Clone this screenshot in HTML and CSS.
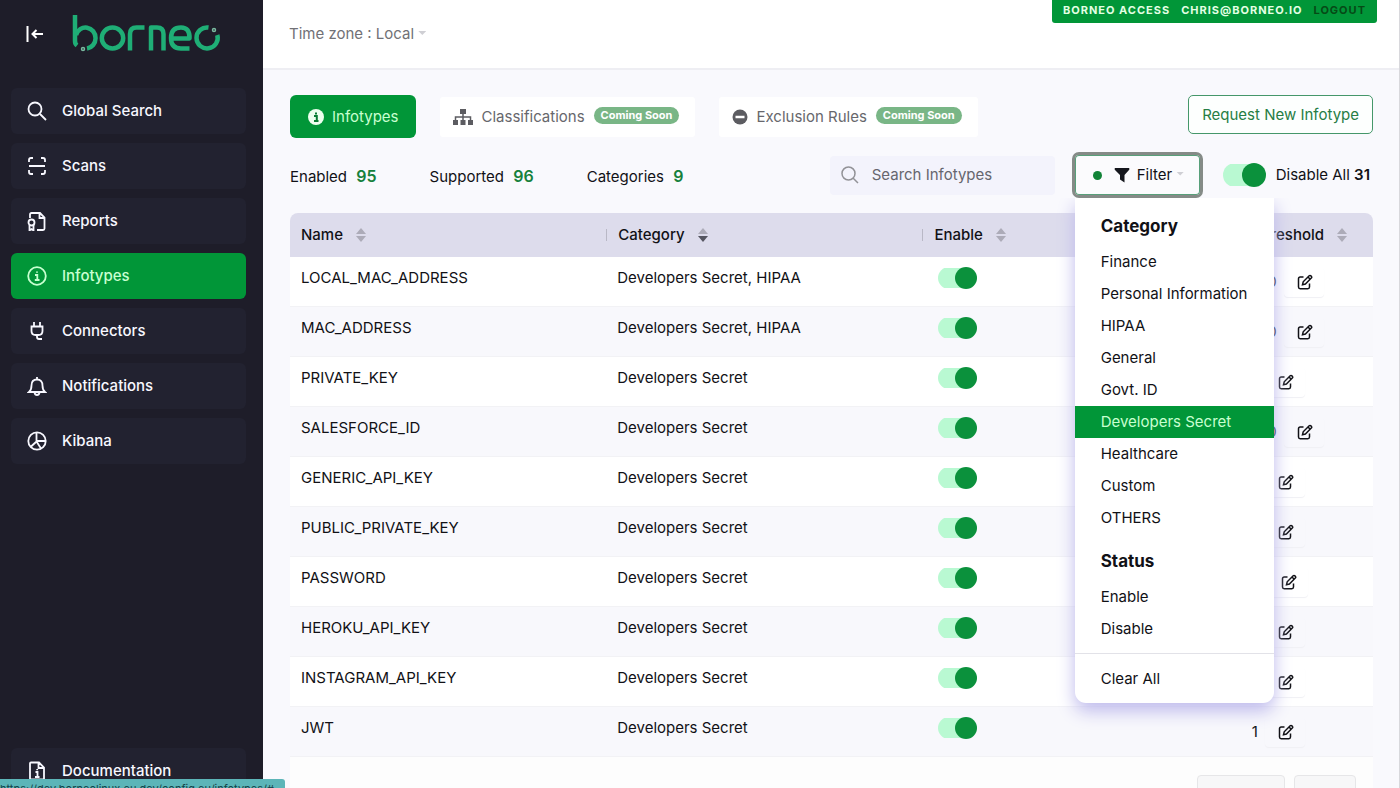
FILE: index.html
```html
<!DOCTYPE html>
<html lang="en">
<head>
<meta charset="utf-8">
<title>Borneo - Infotypes</title>
<link rel="stylesheet" href="styles.css">
</head>
<body>
<svg class="defs" aria-hidden="true">
  <symbol id="edit" viewBox="0 0 16 16"><path d="M6.5 3H3.2Q1.5 3 1.5 4.700V13Q1.500 14.700 3.200 14.700H10.800Q12.500 14.700 12.500 13V9.500" /><path d="M5.500 10.700L6.200 7.800L12.200 1.800Q13 1 13.900 1.900L14.300 2.300Q15.200 3.200 14.300 4L8.400 10ZM11 3L13.200 5.200"/></symbol>
  <symbol id="sort" viewBox="0 0 10 14"><path class="up" d="M5 0L10 6H0Z"/><path class="down" d="M0 8H10L5 14Z"/></symbol>
</svg>
<aside class="sidebar">
  <div class="brand">
    <button class="collapse" aria-label="Collapse menu"><svg width="18" height="18" viewBox="0 0 18 18"><path d="M1.500 1V17M17 9H7M10.500 5L6.500 9L10.500 13"/></svg></button>
    <svg class="logo" width="150" height="40" viewBox="0 0 150 40" role="img" aria-label="borneo">
      <g fill="none" stroke="#1fae76" stroke-width="4.500" stroke-linejoin="round">
        <path d="M3 1V27Q3 30 5 31.500"/><path d="M4 21A10 10.500 0 1 1 15 34.500"/>
        <ellipse cx="40.500" cy="24" rx="10.700" ry="10.500"/>
        <path d="M58 36.500V20Q58 13.500 64.500 13.500H72.500"/>
        <path d="M79 36.500V13.500H85Q91.500 13.500 91.500 20V36.500"/>
        <path d="M100 24.500H117.500Q118 13.500 109 13.500Q99 13.500 99 24Q99 34.500 109 34.500H117.500"/>
        <path d="M136.500 13.500A10.600 10.500 0 1 0 145.300 21"/>
      </g>
      <g fill="none" stroke="#79b89f" stroke-width="1.500"><circle cx="11" cy="35" r="1.500"/><circle cx="142" cy="16" r="1.500"/></g>
    </svg>
  </div>
  <nav class="menu">
    <a class="item" href="#"><svg viewBox="0 0 20 20"><circle cx="8" cy="8" r="6.500"/><path d="M13 13L19 19"/></svg>Global Search</a>
    <a class="item" href="#"><svg viewBox="0 0 20 20"><path d="M2 6V4Q2 2 4 2H6M14 2H16Q18 2 18 4V6M2 14V16Q2 18 4 18H6M14 18H16Q18 18 18 16V14M2 10H18"/></svg>Scans</a>
    <a class="item" href="#"><svg viewBox="0 0 20 20"><path d="M3 7V3.500Q3 2 4.500 2H13L17.500 6.500V17.500Q17.500 19 16 19H10M12.500 2V7H17.500"/><circle cx="4.500" cy="11.500" r="3"/><path d="M2.500 14V19.500L4.500 18L6.500 19.500V14"/></svg>Reports</a>
    <a class="item active" href="#"><svg viewBox="0 0 20 20"><circle cx="10" cy="10" r="8.800"/><path d="M8 9H10.300V14M7.800 14H12.500M10 5.500V6.800"/></svg>Infotypes</a>
    <a class="item" href="#"><svg viewBox="0 0 20 20"><path d="M7 1V5M13 1V5M4.500 5.500H15.500V10Q15.500 14 11.500 14H8.500Q4.500 14 4.500 10ZM10 14V16Q10 18 12 18H15"/></svg>Connectors</a>
    <a class="item" href="#"><svg viewBox="0 0 20 20"><path d="M2 16H18Q15.500 14 15.500 9.500Q15.500 3.500 10 3.500Q4.500 3.500 4.500 9.500Q4.500 14 2 16ZM10 1V3.500M7.500 16.500Q8 19 10 19Q12 19 12.500 16.500"/></svg>Notifications</a>
    <a class="item" href="#"><svg viewBox="0 0 20 20"><circle cx="10" cy="10" r="8.700"/><path d="M9.500 1.500V10.500L3.500 16M9.500 10.500L14 17.500M9.500 10H18.500"/></svg>Kibana</a>
  </nav>
  <a class="item docs" href="#"><svg viewBox="0 0 20 20"><path d="M3 2.500Q3 1.500 4 1.500H12L17 6.500V18.500H4Q3 18.500 3 17.500ZM11.500 1.500V7H17M8.500 11H10.500V16M8 16H12.500M10.200 8V9.300"/></svg>Documentation</a>
</aside>

<div class="page">
  <header class="topbar">
    <button class="zone">Time zone : Local <i class="caret"></i></button>
    <div class="account"><span>BORNEO ACCESS</span><span>CHRIS@BORNEO.IO</span><a href="#">LOGOUT</a></div>
  </header>
  <main class="content">
    <div class="tabs">
      <button class="tab selected"><svg width="16" height="16" viewBox="0 0 16 16"><circle cx="8" cy="8" r="8" fill="#edffee"/><path d="M6 7H8.800V12M6 12H10.500M8 3.500V5.500" fill="none" stroke="#087c33" stroke-width="2"/></svg>Infotypes</button>
      <button class="tab"><svg width="20" height="16" viewBox="0 0 20 16"><path d="M7 0H13V5H7ZM0 11H5V16H0ZM7.500 11H12.500V16H7.500ZM15 11H20V16H15Z" fill="#5c5c61"/><path d="M10 5V11M2.500 11V8H17.500V11" fill="none" stroke="#5c5c61" stroke-width="1.500"/></svg>Classifications<span class="soon">Coming Soon</span></button>
      <button class="tab"><svg width="16" height="16" viewBox="0 0 16 16"><circle cx="8" cy="8" r="7.500" fill="#5c5c61"/><path d="M3.500 8H12.500" stroke="#fff" stroke-width="2.500"/></svg>Exclusion Rules<span class="soon">Coming Soon</span></button>
      <button class="request">Request New Infotype</button>
    </div>
    <div class="tools">
      <div class="stats"><span>Enabled <b>95</b></span><span>Supported <b>96</b></span><span>Categories <b>9</b></span></div>
      <label class="search"><svg width="18" height="18" viewBox="0 0 18 18"><circle cx="7.500" cy="7.500" r="6.500"/><path d="M12 12L17 17"/></svg><input type="text" placeholder="Search Infotypes" aria-label="Search Infotypes"></label>
      <div class="filter">
        <button class="filter-button"><i class="dot"></i><svg width="16" height="16" viewBox="0 0 16 16"><path d="M1 1H15Q16 2 15 3L10.500 8V15.500L6 12.500V8L1 3Q0 2 1 1Z" fill="#15171d"/></svg>Filter<i class="caret"></i></button>
        <div class="dropdown">
          <h3>Category</h3>
          <button>Finance</button><button>Personal Information</button><button>HIPAA</button><button>General</button><button>Govt. ID</button><button class="chosen">Developers Secret</button><button>Healthcare</button><button>Custom</button><button>OTHERS</button>
          <h3 class="status-title">Status</h3>
          <button>Enable</button><button>Disable</button>
          <hr>
          <button>Clear All</button>
        </div>
      </div>
      <label class="all"><input class="switch" type="checkbox" checked><span>Disable All <b>31</b></span></label>
    </div>
    <table>
      <colgroup><col class="wide"><col class="wide"><col class="wide"><col></colgroup>
      <thead><tr>
        <th><span>Name<svg class="sort"><use href="#sort"/></svg></span></th>
        <th><span>Category<svg class="sort desc"><use href="#sort"/></svg></span></th>
        <th><span>Enable<svg class="sort"><use href="#sort"/></svg></span></th>
        <th><span>Threshold<svg class="sort"><use href="#sort"/></svg></span></th>
      </tr></thead>
      <tbody id="rows"></tbody>
    </table>
    <div class="pager"><button aria-label="Rows per page"></button><button class="small" aria-label="Next"></button></div>
  </main>
</div>
<div class="link-status">https://dev.borneolinux.eu.dev/config.eu/infotypes/#</div>
<script src="rows.js"></script>
</body>
</html>
```
FILE: styles.css
```css
* { box-sizing: border-box; }
body { margin: 0; height: 100vh; display: flex; overflow: hidden; background: #f9f9fd; color: #111116; font: 15px/24px Inter, "Liberation Sans", sans-serif; }
button, input { font: inherit; color: inherit; border: 0; background: none; padding: 0; margin: 0; }
a { color: inherit; text-decoration: none; }
.defs { position: absolute; width: 0; height: 0; }

.sidebar { width: 263px; flex: none; background: #1e1d29; padding: 12px 17px 0 11px; display: flex; flex-direction: column; height: 100vh; }
.brand { display: flex; align-items: center; gap: 28px; padding-left: 15px; height: 44px; margin-bottom: 32px; }
.collapse { height: 18px; display: flex; color: #fff; }
.collapse svg, .item svg, .search svg, .edit svg { fill: none; stroke: currentColor; stroke-width: 2; }
.menu { display: flex; flex-direction: column; gap: 9px; }
.item { display: flex; align-items: center; gap: 15px; height: 46px; padding-left: 16px; border-radius: 6px; background: #222230; color: #f8f8ff; font-weight: 500; }
.item svg { width: 20px; height: 20px; stroke-width: 1.8; }
.item.active { background: #019638; color: #c8ffd0; }
.docs { margin-top: auto; margin-bottom: -6px; flex: none; }

.page { flex: 1; min-width: 0; border-right: 1px solid #d8d8dc; }
.topbar { height: 70px; background: #fff; border-bottom: 2px solid #eeeef3; display: flex; justify-content: space-between; padding: 0 22px 0 26px; align-items: flex-start; }
.zone { color: #717176; margin-top: 22px; }
.caret { display: inline-block; width: 8px; height: 4px; background: #cfcfd4; clip-path: polygon(0 0, 100% 0, 50% 100%); vertical-align: 4px; }
.account { display: flex; gap: 11px; height: 23px; padding: 0 11px; background: #019638; color: #e4ffe4; border-radius: 0 0 3px 3px; font-size: 11px; line-height: 20px; font-weight: 700; letter-spacing: 1px; }
.account a { color: #064a16; }

.content { padding: 25px 26px 0 27px; }
.tabs { display: flex; gap: 24px; align-items: center; height: 43px; }
.tab { display: flex; align-items: center; height: 40px; padding: 0 16px 0 13px; background: #fff; color: #67676c; border-radius: 3px; }
.tab svg { margin-right: 8px; }
.tab.selected { height: 43px; padding: 0 18px; background: #019638; color: #c8ffd0; border-radius: 6px; }
.soon { background: #79b686; color: #fff; border-radius: 9px; font-size: 11px; line-height: 17px; font-weight: 700; padding: 0 7px; margin: 0 0 2px 9px; }
.request { align-self: flex-start; margin-left: auto; height: 39px; padding: 0 13px; border: 1px solid #45976a; border-radius: 5px; background: #fdfffe; color: #277d45; }

.tools { display: flex; align-items: center; height: 46px; margin-top: 14px; padding-right: 3px; }
.stats { display: flex; gap: 53px; padding-top: 2px; }
.stats b { color: #16813c; font-weight: 600; font-size: 16px; margin-left: 5px; }
.search { margin-left: auto; width: 225px; height: 39px; display: flex; align-items: center; gap: 13px; padding-left: 11px; background: #f3f3fc; border-radius: 4px; color: #929297; }
.search svg { stroke-width: 1.5; flex: none; }
.search input { min-width: 0; flex: 1; outline: 0; }
.search input::placeholder { color: #66666e; opacity: 1; }
.filter { position: relative; margin-left: 17px; }
.filter-button { display: flex; align-items: center; width: 131px; height: 46px; border: 3px solid #858b87; border-radius: 7px; box-shadow: inset 0 0 0 1px #58a07a; padding-left: 18px; background: #fbfbfd; }
.filter-button svg { margin: 0 7px 0 12px; }
.filter-button .caret { margin: -3px 0 0 4px; }
.dot { width: 9px; height: 9px; border-radius: 50%; background: #118337; }
.dropdown { position: absolute; z-index: 2; top: 46px; left: 3px; width: 199px; padding: 12px 0 8px; border-radius: 0 0 11px 11px; background: #fff; box-shadow: 0 8px 18px #bdb9ec; clip-path: inset(0 -30px -40px); display: flex; flex-direction: column; }
.dropdown h3 { margin: 0 0 4px; padding-left: 26px; font-size: 17px; line-height: 32px; font-weight: 700; }
.dropdown .status-title { margin-top: 11px; }
.dropdown button { height: 32px; padding-left: 26px; text-align: left; }
.dropdown .chosen { background: #019638; color: #c8ffd0; }
.dropdown hr { width: 100%; height: 1px; border: 0; background: #e2e2e8; margin: 8px 0 9px; }
.all { display: flex; align-items: center; gap: 10px; margin-left: 20px; white-space: nowrap; }
.all b { font-weight: 600; }
.switch { appearance: none; flex: none; display: flex; justify-content: flex-end; width: 43px; height: 24px; background: linear-gradient(#b9f9d2, #b9f9d2) left / 32px 22px no-repeat; border-radius: 12px; }
.switch::before { content: ""; width: 24px; height: 24px; border-radius: 50%; background: #0b913c; }

table { width: 100%; table-layout: fixed; border-collapse: separate; border-spacing: 0; margin-top: 15px; }
.wide { width: 29.2%; }
th { height: 44px; padding: 0 11px; background: #dddcec; text-align: left; font-weight: 500; }
th:first-child { border-radius: 8px 0 0 0; }
th:last-child { border-radius: 0 8px 0 0; padding: 0 0 0 13px; }
th span { display: flex; align-items: center; height: 12px; gap: 13px; }
th:nth-child(2) span, th:nth-child(3) span { border-left: 1px solid #b9b8c6; padding-left: 11px; margin-left: -11px; }
.sort { width: 10px; height: 14px; fill: #acabb8; }
.desc { --down: #555560; }
.down { fill: var(--down, #acabb8); }
td { height: 50px; padding: 0 11px 7px; background: #f8f8fc; border-bottom: 1px solid #f2f2f5; vertical-align: middle; }
tr:nth-child(odd) td { background: #fff; }
td .switch { width: 39px; height: 22px; margin-left: 5px; background-size: 28px 20px; }
td .switch::before { width: 22px; height: 22px; }
td:last-child { padding: 0 0 0 13px; }
.threshold { display: flex; align-items: center; }
.edit { width: 40px; height: 30px; margin-left: 7px; padding-left: 13px; border-radius: 4px; box-shadow: 0 1px 1px #f0f0f4; display: flex; align-items: center; }
.edit svg { width: 16px; height: 16px; flex: none; stroke-width: 1.5; }
.pager { display: flex; justify-content: flex-end; gap: 9px; height: 60px; padding: 18px 17px 0; background: #fdfdfd; }
.pager button { width: 88px; height: 32px; border: 1px solid #e6e6e8; border-radius: 4px; background: #f7f7f8; }
.pager .small { width: 62px; }
.link-status { position: absolute; left: 0; bottom: 0; height: 9px; width: 285px; overflow: hidden; background: #5cb5b8; border-radius: 0 3px 0 0; color: #124449; font-size: 11px; line-height: 20px; white-space: nowrap; }
```
FILE: rows.js
```js
const rows = [
  ["LOCAL_MAC_ADDRESS", "Developers Secret, HIPAA", 100],
  ["MAC_ADDRESS", "Developers Secret, HIPAA", 100],
  ["PRIVATE_KEY", "Developers Secret", 1],
  ["SALESFORCE_ID", "Developers Secret", 100],
  ["GENERIC_API_KEY", "Developers Secret", 1],
  ["PUBLIC_PRIVATE_KEY", "Developers Secret", 1],
  ["PASSWORD", "Developers Secret", 5],
  ["HEROKU_API_KEY", "Developers Secret", 1],
  ["INSTAGRAM_API_KEY", "Developers Secret", 1],
  ["JWT", "Developers Secret", 1]
];
document.getElementById("rows").innerHTML = rows.map(([name, category, threshold]) => `
  <tr><td>${name}</td><td>${category}</td>
  <td><input class="switch" type="checkbox" checked aria-label="Enable ${name}"></td>
  <td><div class="threshold">${threshold}<button class="edit" aria-label="Edit ${name}"><svg><use href="#edit"/></svg></button></div></td></tr>`).join("");
```
